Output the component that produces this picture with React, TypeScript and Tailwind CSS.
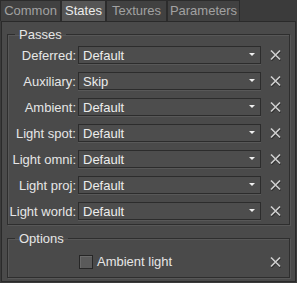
import type { ReactNode } from "react";

const tabs = [
  { name: "Common", w: "w-[61px]" },
  { name: "States", w: "w-[45px]" },
  { name: "Textures", w: "w-[61px]" },
  { name: "Parameters", w: "w-[73px]" },
];

const passes = [
  { label: "Deferred:", value: "Default" },
  { label: "Auxiliary:", value: "Skip" },
  { label: "Ambient:", value: "Default" },
  { label: "Light spot:", value: "Default" },
  { label: "Light omni:", value: "Default" },
  { label: "Light proj:", value: "Default" },
  { label: "Light world:", value: "Default" },
];

const ClearIcon = () => (
  <svg width="12" height="12" viewBox="0 0 12 12" className="block">
    <path d="M1.5 2.5 L10.5 11.5 M10.5 2.5 L1.5 11.5" stroke="#2a2a2a" strokeWidth="1.6" />
    <path d="M1 1.5 L10 10.5 M10 1.5 L1 10.5" stroke="#cdcdcd" strokeWidth="1.7" />
  </svg>
);

const Combo = ({ value }: { value: string }) => (
  <div className="h-[18px] w-[183px] flex items-center justify-between pl-[4px] pr-[5px] bg-[#4d4d4d] border border-[#2c2c2c] shadow-[0_1px_0_#585858]">
    <span className="text-[13px] leading-none text-[#ececec]">{value}</span>
    <svg width="6" height="4" viewBox="0 0 6 4" className="block">
      <path d="M0 0 H6 L3 3 Z" fill="#f0f0f0" />
    </svg>
  </div>
);

const Group = ({ title, className, children }: { title: string; className?: string; children: ReactNode }) => (
  <fieldset
    className={`mx-[5px] border border-[#2e2e2e] shadow-[1px_1px_0_#575757,inset_1px_1px_0_#575757] ${className ?? ""}`}
  >
    <legend className="ml-[7px] px-[4px] text-[13px] leading-[15px] text-[#e6e6e6]">{title}</legend>
    {children}
  </fieldset>
);

export default function App() {
  return (
    <div
      className="w-[297px] h-[283px] bg-[#3b3b3b] flex flex-col"
      style={{ fontFamily: '"Liberation Sans", Arial, sans-serif' }}
    >
      <div className="flex h-[21px]">
        {tabs.map((t) => (
          <div
            key={t.name}
            className={`${t.w} h-[21px] flex items-center justify-center text-[13px] border border-b-0 border-[#2c2c2c] ${
              t.name === "States" ? "bg-[#555555] text-[#ececec]" : "bg-[#414141] text-[#a2a2a2]"
            }`}
          >
            {t.name}
          </div>
        ))}
      </div>
      <div className="ml-[1px] w-[295px] h-[261px] bg-[#4a4a4a] border border-[#2a2a2a] flex flex-col">
        <Group title="Passes" className="mt-[5px] pb-[4px]">
          <div className="flex flex-col gap-[8px] pt-[4px]">
            {passes.map((p) => (
              <div key={p.label} className="flex items-center h-[18px]">
                <span className="w-[68px] text-right text-[13px] leading-none text-[#e6e6e6] whitespace-nowrap">
                  {p.label}
                </span>
                <div className="ml-[2px]">
                  <Combo value={p.value} />
                </div>
                <div className="ml-[9px]">
                  <ClearIcon />
                </div>
              </div>
            ))}
          </div>
        </Group>
        <Group title="Options" className="mt-[6px] pb-[8px]">
          <div className="flex items-center h-[15px] mt-[8px]">
            <div className="w-[71px]" />
            <div className="w-[14px] h-[14px] bg-[#5a5a5a] border border-[#262626] shadow-[inset_1px_1px_0_#6a6a6a]" />
            <span className="ml-[4px] w-[164px] text-[13px] leading-none text-[#e6e6e6]">Ambient light</span>
            <div className="ml-[9px]">
              <ClearIcon />
            </div>
          </div>
        </Group>
      </div>
    </div>
  );
}
